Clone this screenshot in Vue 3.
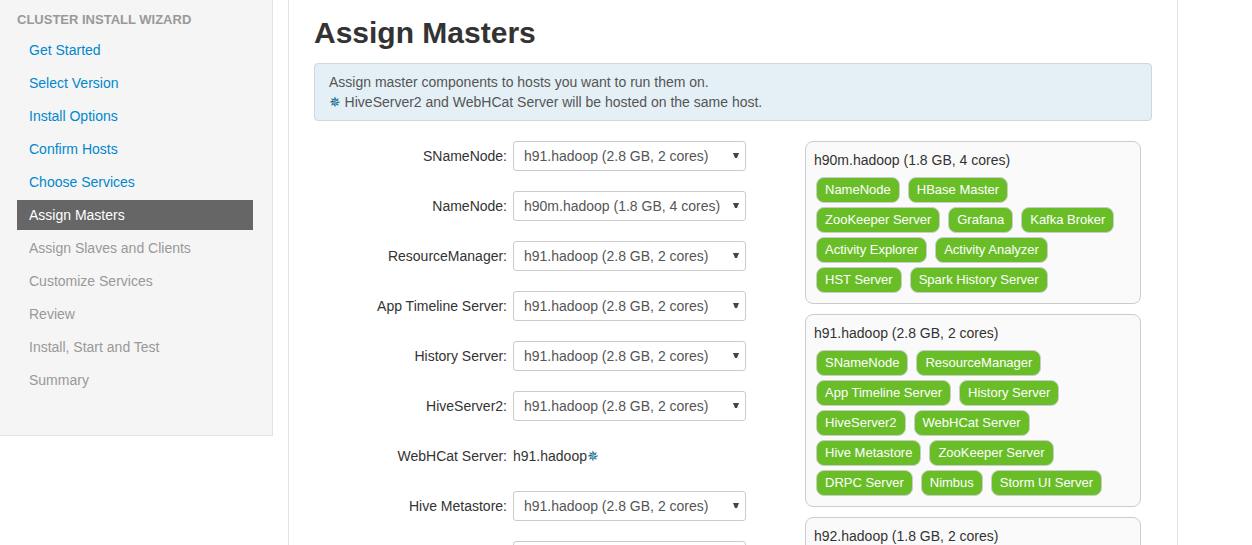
<script setup>
import { ref } from 'vue'

const steps = [
  { name: 'Get Started', state: 'done' },
  { name: 'Select Version', state: 'done' },
  { name: 'Install Options', state: 'done' },
  { name: 'Confirm Hosts', state: 'done' },
  { name: 'Choose Services', state: 'done' },
  { name: 'Assign Masters', state: 'active' },
  { name: 'Assign Slaves and Clients', state: 'disabled' },
  { name: 'Customize Services', state: 'disabled' },
  { name: 'Review', state: 'disabled' },
  { name: 'Install, Start and Test', state: 'disabled' },
  { name: 'Summary', state: 'disabled' },
]

const hosts = [
  {
    id: 'h90m.hadoop',
    info: 'h90m.hadoop (1.8 GB, 4 cores)',
    components: [
      'NameNode', 'HBase Master', 'ZooKeeper Server', 'Grafana', 'Kafka Broker',
      'Activity Explorer', 'Activity Analyzer', 'HST Server', 'Spark History Server',
    ],
  },
  {
    id: 'h91.hadoop',
    info: 'h91.hadoop (2.8 GB, 2 cores)',
    components: [
      'SNameNode', 'ResourceManager', 'App Timeline Server', 'History Server',
      'HiveServer2', 'WebHCat Server', 'Hive Metastore', 'ZooKeeper Server',
      'DRPC Server', 'Nimbus', 'Storm UI Server',
    ],
  },
  { id: 'h92.hadoop', info: 'h92.hadoop (1.8 GB, 2 cores)', components: [] },
]

const masters = ref([
  { name: 'SNameNode', host: 'h91.hadoop' },
  { name: 'NameNode', host: 'h90m.hadoop' },
  { name: 'ResourceManager', host: 'h91.hadoop' },
  { name: 'App Timeline Server', host: 'h91.hadoop' },
  { name: 'History Server', host: 'h91.hadoop' },
  { name: 'HiveServer2', host: 'h91.hadoop' },
  { name: 'WebHCat Server', host: 'h91.hadoop', fixed: true },
  { name: 'Hive Metastore', host: 'h91.hadoop' },
  { name: 'HBase Master', host: 'h90m.hadoop' },
])
</script>

<template>
  <div class="page">
    <nav class="sidebar" aria-label="Cluster Install Wizard">
      <div class="nav-header">CLUSTER INSTALL WIZARD</div>
      <ul class="steps">
        <li v-for="step in steps" :key="step.name">
          <a
            class="step"
            :class="step.state"
            href="#"
            :aria-current="step.state === 'active' ? 'step' : undefined"
            :aria-disabled="step.state === 'disabled' ? 'true' : undefined"
          >{{ step.name }}</a>
        </li>
      </ul>
    </nav>

    <main class="content">
      <h1 class="title">Assign Masters</h1>
      <div class="alert">
        <div>Assign master components to hosts you want to run them on.</div>
        <div><span class="asterisk">✵</span> HiveServer2 and WebHCat Server will be hosted on the same host.</div>
      </div>

      <div class="columns">
        <form class="assignments">
          <div v-for="(master, i) in masters" :key="master.name" class="row">
            <template v-if="master.fixed">
              <span class="label">{{ master.name }}:</span>
              <span class="fixed-host">{{ master.host }}<span class="asterisk">✵</span></span>
            </template>
            <template v-else>
              <label class="label" :for="'master-' + i">{{ master.name }}:</label>
              <span class="select-wrap">
                <select :id="'master-' + i" v-model="master.host" class="select">
                  <option v-for="host in hosts" :key="host.id" :value="host.id">{{ host.info }}</option>
                </select>
                <svg class="arrow" viewBox="0 0 6 6" aria-hidden="true"><path d="M0 0H6L4 5H2Z" /></svg>
              </span>
            </template>
          </div>
        </form>

        <div class="hosts">
          <section v-for="host in hosts" :key="host.id" class="host">
            <div>{{ host.info }}</div>
            <div class="chips">
              <span v-for="component in host.components" :key="component" class="chip">{{ component }}</span>
            </div>
          </section>
        </div>
      </div>
    </main>
  </div>
</template>

<style>
body {
  margin: 0;
  background: #fff;
}
</style>

<style scoped>
.page {
  display: flex;
  align-items: flex-start;
  gap: 15px;
  height: 100vh;
  padding-right: 74px;
  box-sizing: border-box;
  overflow: hidden;
  font-family: "Liberation Sans", Arial, sans-serif;
  font-size: 14px;
  line-height: 20px;
  color: #333;
}

.sidebar {
  flex: none;
  width: 273px;
  box-sizing: border-box;
  padding: 10px 19px 40px 17px;
  background: #f5f5f5;
  border: solid #e3e3e3;
  border-width: 0 1px 1px 0;
}

.nav-header {
  margin-bottom: 5px;
  font-size: 13px;
  font-weight: bold;
  color: #999;
}

.steps {
  display: flex;
  flex-direction: column;
  gap: 3px;
  margin: 0;
  padding: 0;
  list-style: none;
}

.step {
  display: block;
  padding: 5px 12px;
  color: #08c;
  text-decoration: none;
}

.step.active {
  background: #666;
  color: #fff;
}

.step.disabled {
  color: #999;
}

.content {
  flex: 1;
  min-width: 0;
  padding: 13px 25px 20px;
  border: solid #e3e3e3;
  border-width: 0 1px;
}

.title {
  margin: 0 0 10px;
  font-size: 30px;
  line-height: 40px;
  font-weight: bold;
}

.alert {
  margin-bottom: 20px;
  padding: 8px 14px;
  border: 1px solid #cdd9dc;
  border-radius: 4px;
  background: #e4f0f5;
  color: #555;
}

.asterisk {
  font-family: "DejaVu Sans", sans-serif;
  font-weight: bold;
  color: #00648c;
}

.columns {
  display: flex;
  align-items: flex-start;
  justify-content: space-between;
  padding-right: 11px;
}

.assignments {
  display: flex;
  flex-direction: column;
  gap: 20px;
  width: 432px;
}

.row {
  display: flex;
  align-items: center;
  gap: 6px;
  height: 30px;
}

.label {
  flex: 1;
  text-align: right;
}

.select-wrap,
.fixed-host {
  position: relative;
  flex: none;
  width: 233px;
}

.select {
  display: block;
  width: 100%;
  height: 30px;
  padding: 4px 20px 4px 10px;
  border: 1px solid #ccc;
  border-radius: 3px;
  background: #fff;
  color: #555;
  font: inherit;
  appearance: none;
}

.arrow {
  position: absolute;
  top: 12px;
  right: 7px;
  width: 6px;
  height: 6px;
  fill: #444;
  pointer-events: none;
}

.hosts {
  display: flex;
  flex-direction: column;
  gap: 10px;
  width: 336px;
}

.host {
  padding: 8px 8px 10px;
  box-sizing: border-box;
  border: 1px solid #ccc;
  border-radius: 8px;
  background: #fafafa;
}

.chips {
  display: flex;
  flex-wrap: wrap;
  gap: 4px 8px;
  padding: 7px 2px 0;
}

.chip {
  padding: 2px 8px;
  border: 1px solid #ccc;
  border-radius: 8px;
  background: #69be28;
  color: #fff;
  font-size: 13px;
  white-space: nowrap;
}
</style>
